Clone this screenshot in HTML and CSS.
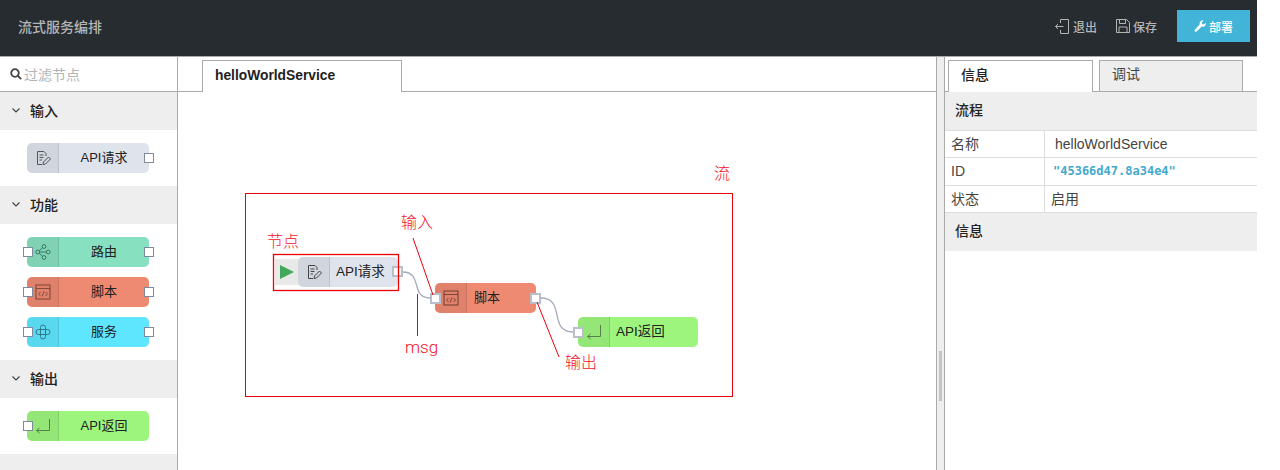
FILE: index.html
```html
<!DOCTYPE html>
<html lang="zh">
<head>
  <meta charset="UTF-8">
  <title>流式服务编排</title>
  <link rel="stylesheet" href="styles.css">
</head>
<body>
<div class="app">

  <header class="header">
    <div class="title">流式服务编排</div>
    <div class="actions">
      <a class="action">
        <svg width="14" height="15" viewBox="0 0 14 15" fill="none" stroke="#b5b5b5"><path d="M5.500 4V.5h8v14h-8V11M.5 7.500h8M3 5L.5 7.500 3 10"/></svg>
        退出
      </a>
      <a class="action action-save">
        <svg width="14" height="14" viewBox="0 0 14 14" fill="none" stroke="#b5b5b5"><path d="M.5.5h10l3 3v10H.5zM3.500.5v4h6v-4M3 13.500V8h8v5.500"/></svg>
        保存
      </a>
      <a class="deploy">
        <svg width="12" height="12" viewBox="0 0 12 12" fill="#fff"><path d="M11.700 2.700c.4 1.500-.1 3-1.500 3.700-1 .5-1.800.4-2.500.2L3 11.300c-.6.600-1.500.6-2 .1s-.6-1.400 0-2l4.700-4.800c-.2-.8-.2-1.700.3-2.500C6.800.7 8.300.1 9.600.4L7.800 2.300l.4 1.700 1.700.5z"/></svg>
        部署
      </a>
    </div>
  </header>

  <div class="main">

    <aside class="palette">
      <div class="filter">
        <svg width="12" height="12" viewBox="0 0 12 12" fill="none" stroke="#444" stroke-width="1.800"><circle cx="5" cy="5" r="3.800"/><path d="M8 8l3.200 3.200"/></svg>
        <span>过滤节点</span>
      </div>

      <div class="cat"><svg class="chev" width="8" height="5" viewBox="0 0 8 5" fill="none" stroke="#444" stroke-width="1.200"><path d="M.5.5L4 4 7.500.5"/></svg>输入</div>
      <div class="cat-body">
        <div class="node c-grey">
          <div class="node-icon">
            <svg width="16" height="16" viewBox="0 0 16 16" fill="none" stroke="#555"><use href="#i-api"/></svg>
          </div>
          <div class="node-label">API请求</div>
          <i class="port port-r"></i>
        </div>
      </div>

      <div class="cat"><svg class="chev" width="8" height="5" viewBox="0 0 8 5" fill="none" stroke="#444" stroke-width="1.200"><path d="M.5.5L4 4 7.500.5"/></svg>功能</div>
      <div class="cat-body">
        <div class="node c-teal">
          <div class="node-icon">
            <svg width="16" height="16" viewBox="0 0 16 16" fill="none" stroke="#3f7a68"><use href="#i-route"/></svg>
          </div>
          <div class="node-label">路由</div>
          <i class="port port-l"></i><i class="port port-r"></i>
        </div>
        <div class="node c-red">
          <div class="node-icon">
            <svg width="16" height="16" viewBox="0 0 16 16" fill="none" stroke="#7a4436"><use href="#i-script"/></svg>
          </div>
          <div class="node-label">脚本</div>
          <i class="port port-l"></i><i class="port port-r"></i>
        </div>
        <div class="node c-cyan">
          <div class="node-icon">
            <svg width="16" height="16" viewBox="0 0 16 16" fill="none" stroke="#2f7a8c"><use href="#i-service"/></svg>
          </div>
          <div class="node-label">服务</div>
          <i class="port port-l"></i><i class="port port-r"></i>
        </div>
      </div>

      <div class="cat"><svg class="chev" width="8" height="5" viewBox="0 0 8 5" fill="none" stroke="#444" stroke-width="1.200"><path d="M.5.5L4 4 7.500.5"/></svg>输出</div>
      <div class="cat-body">
        <div class="node c-green">
          <div class="node-icon">
            <svg width="16" height="16" viewBox="0 0 16 16" fill="none" stroke="#55804a"><use href="#i-return"/></svg>
          </div>
          <div class="node-label">API返回</div>
          <i class="port port-l"></i>
        </div>
      </div>
      <div class="cat cat-empty"></div>
    </aside>

    <section class="workspace">
      <div class="tabs">
        <div class="tab">helloWorldService</div>
      </div>
      <div class="canvas">
        <!-- wires sit under the nodes -->
        <svg class="overlay" width="758" height="378">
          <path d="M225 180C245 180 232 206 252 206" fill="none" stroke="#a4adbb" stroke-width="1.300"/>
          <path d="M363 206C388 206 370 240 395 240" fill="none" stroke="#a4adbb" stroke-width="1.300"/>
        </svg>

        <div class="play"><i></i></div>

        <div class="node c-grey flow-api">
          <div class="node-icon">
            <svg width="16" height="16" viewBox="0 0 16 16" fill="none" stroke="#444"><use href="#i-api"/></svg>
          </div>
          <div class="node-label">API请求</div>
          <i class="port port-r flow-port"></i>
        </div>

        <div class="node c-red flow-script">
          <div class="node-icon">
            <svg width="16" height="16" viewBox="0 0 16 16" fill="none" stroke="#6e3d30"><use href="#i-script"/></svg>
          </div>
          <div class="node-label">脚本</div>
          <i class="port port-l flow-port"></i><i class="port port-r flow-port"></i>
        </div>

        <div class="node c-green flow-return">
          <div class="node-icon">
            <svg width="16" height="16" viewBox="0 0 16 16" fill="none" stroke="#55804a"><use href="#i-return"/></svg>
          </div>
          <div class="node-label">API返回</div>
          <i class="port port-l flow-port"></i>
        </div>

        <!-- red annotations drawn on top -->
        <svg class="overlay" width="758" height="378">
          <rect x="67.500" y="101.500" width="487" height="203" fill="none" stroke="#e8000d"/>
          <rect x="95.500" y="162.500" width="125" height="36" fill="none" stroke="#f00000" stroke-width="1.300"/>
          <path d="M235 146l20 57M239.500 202v42M359 210l22 55" fill="none" stroke="#e8000d"/>
        </svg>

        <div class="note note-flow">流</div>
        <div class="note note-node">节点</div>
        <div class="note note-in">输入</div>
        <div class="note note-msg">msg</div>
        <div class="note note-out">输出</div>
      </div>
    </section>

    <div class="splitter"><i></i></div>

    <aside class="sidebar">
      <div class="side-tabs">
        <div class="side-tab active">信息</div>
        <div class="side-tab">调试</div>
      </div>
      <div class="section">流程</div>
      <div class="row"><div class="key">名称</div><div class="val val-name">helloWorldService</div></div>
      <div class="row row-id"><div class="key">ID</div><div class="val val-id">"45366d47.8a34e4"</div></div>
      <div class="row"><div class="key">状态</div><div class="val">启用</div></div>
      <div class="section section-last">信息</div>
    </aside>

  </div>
</div>

<svg class="defs" width="0" height="0">
  <symbol id="i-api" viewBox="0 0 16 16">
    <path d="M11 6V3.500L9 1.500H2.500v13H7M4.500 5h4M4.500 7.500h4M4.500 10h2.500M8 14.500l.5-2.500 5-5 2 2-5 5z"/>
  </symbol>
  <symbol id="i-route" viewBox="0 0 16 16">
    <circle cx="2.800" cy="8" r="1.900"/><circle cx="13.200" cy="8" r="1.900"/><circle cx="9" cy="2.500" r="1.900"/><circle cx="9" cy="13.500" r="1.900"/>
    <path d="M4.700 8h6.600M4.200 6.700l3.500-3M4.200 9.300l3.500 3"/>
  </symbol>
  <symbol id="i-script" viewBox="0 0 16 16">
    <rect x="1" y="1" width="14" height="14"/><path d="M1 4.500h14M5.500 8L3.500 10l2 2M10.500 8l2 2-2 2M9 7.500L7 12.500" stroke-width=".9"/>
  </symbol>
  <symbol id="i-service" viewBox="0 0 16 16">
    <rect x="1" y="5.500" width="14" height="5" rx="2.500"/><rect x="5.500" y="1" width="5" height="14" rx="2.500"/>
  </symbol>
  <symbol id="i-return" viewBox="0 0 16 16">
    <path d="M14.500 1v11.500H1.500M4.500 10l-3 2.500 3 2.500"/>
  </symbol>
</svg>
</body>
</html>
```

FILE: styles.css
```css
* {
  box-sizing: border-box;
}

html, body {
  margin: 0;
  height: 470px;
  overflow: hidden;
  background: #fff;
}

body {
  font-family: "Liberation Sans", "Noto Sans CJK SC", sans-serif;
  color: #333;
}

.app {
  width: 1257px;
  height: 470px;
  display: flex;
  flex-direction: column;
}

.defs {
  position: absolute;
}

/* header */
.header {
  height: 57px;
  flex: none;
  background: #272c30;
  border-bottom: 1px solid #aaa;
  display: flex;
  align-items: center;
  justify-content: space-between;
  padding: 0 7px 4px 18px;
  color: #b5b5b5;
}

.title {
  font-size: 14px;
  font-weight: 500;
}

.actions {
  display: flex;
  align-items: center;
}

.action {
  display: flex;
  align-items: center;
  gap: 4px;
  font-size: 12px;
  font-weight: 500;
  margin-right: 19px;
}

.action-save {
  gap: 3px;
  margin-right: 20px;
}

.deploy {
  width: 73px;
  height: 32px;
  background: #41b4d8;
  color: #fff;
  font-size: 12px;
  font-weight: 500;
  display: flex;
  align-items: center;
  justify-content: center;
  gap: 3px;
}

.main {
  flex: 1;
  display: flex;
  min-height: 0;
}

/* left palette */
.palette {
  width: 178px;
  flex: none;
  border-right: 1px solid #aaa;
  overflow: hidden;
}

.filter {
  height: 35px;
  border-bottom: 1px solid #aaa;
  display: flex;
  align-items: center;
  gap: 2px;
  padding-left: 10px;
  font-size: 14px;
  color: #b4b4b4;
}

.cat {
  height: 38px;
  background: #eee;
  display: flex;
  align-items: center;
  padding: 0 0 2px 12px;
  font-size: 14px;
  font-weight: 500;
  color: #222;
}

.cat-empty {
  height: 20px;
}

.chev {
  margin-right: 10px;
}

.cat-body {
  padding: 13px 0 13px 27px;
  display: flex;
  flex-direction: column;
  gap: 10px;
}

/* nodes */
.node {
  position: relative;
  width: 122px;
  height: 30px;
  border-radius: 5px;
  display: flex;
  font-size: 13px;
  color: #222;
}

.node-icon {
  width: 32px;
  flex: none;
  display: flex;
  align-items: center;
  justify-content: center;
  border-radius: 5px 0 0 5px;
  background: rgba(0, 0, 0, 0.06);
  border-right: 1px solid rgba(0, 0, 0, 0.1);
}

.node-label {
  flex: 1;
  text-align: center;
  line-height: 29px;
}

.c-grey { background: #dfe4ec; }
.c-teal { background: #87e0bf; }
.c-red { background: #ef8a72; }
.c-cyan { background: #5fe6ff; }
.c-green { background: #9ef57e; }

.port {
  position: absolute;
  top: 10px;
  width: 10px;
  height: 10px;
  background: #fff;
  border: 1px solid #7f8b9d;
}

.port-l { left: -4px; }
.port-r { right: -5px; }

.flow-port {
  width: 11px;
  height: 11px;
  border: 2px solid #b8bfcb;
}

.flow-port.port-l { left: -5px; }

/* workspace */
.workspace {
  width: 758px;
  flex: none;
  display: flex;
  flex-direction: column;
}

.tabs {
  height: 35px;
  flex: none;
  border-bottom: 1px solid #aaa;
  padding: 3px 0 0 24px;
}

.tab {
  width: 200px;
  height: 32px;
  background: #fff;
  border: 1px solid #aaa;
  border-bottom: 0;
  padding-left: 12px;
  line-height: 30px;
  font-size: 13.800px;
  font-weight: bold;
  color: #222;
}

.canvas {
  position: relative;
  flex: 1;
}

.overlay {
  position: absolute;
  left: 0;
  top: 0;
}

.note {
  position: absolute;
  font-size: 16px;
  line-height: 20px;
  color: #f5101f;
  font-weight: 300;
}

.note-flow { left: 536px; top: 72px; }
.note-node { left: 89px; top: 140px; }
.note-in { left: 223px; top: 121px; }
.note-msg { left: 227px; top: 245px; font-family: Roboto, sans-serif; font-size: 17px; }
.note-out { left: 387px; top: 261px; }

.play {
  position: absolute;
  left: 97px;
  top: 167px;
  width: 26px;
  height: 26px;
  background: #e9e9e9;
  display: flex;
  align-items: center;
  padding-left: 5px;
}

.play i {
  border-left: 14px solid #42a85a;
  border-top: 7.500px solid transparent;
  border-bottom: 7.500px solid transparent;
}

.flow-api {
  position: absolute;
  left: 120px;
  top: 165px;
  width: 100px;
}

.flow-api .flow-port {
  top: 9px;
}

.flow-script {
  position: absolute;
  left: 257px;
  top: 191px;
  width: 101px;
}

.flow-return {
  position: absolute;
  left: 400px;
  top: 225px;
  width: 120px;
}

.flow-api .node-label,
.flow-return .node-label {
  text-align: left;
  padding-left: 6px;
  font-size: 13.500px;
}

.flow-script .node-label {
  text-align: left;
  padding-left: 7px;
}

/* splitter */
.splitter {
  width: 9px;
  flex: none;
  background: #eee;
  border-left: 1px solid #aaa;
  border-right: 1px solid #aaa;
  position: relative;
}

.splitter i {
  position: absolute;
  left: 2px;
  top: 294px;
  width: 3px;
  height: 50px;
  background: #c4c4c4;
}

/* right sidebar */
.sidebar {
  flex: 1;
  min-width: 0;
}

.side-tabs {
  height: 35px;
  display: flex;
  gap: 6px;
  padding: 3px 0 0 3px;
  border-bottom: 1px solid #aaa;
}

.side-tab {
  width: 144px;
  height: 31px;
  border: 1px solid #aaa;
  border-bottom: 0;
  background: #eee;
  padding-left: 12px;
  line-height: 27px;
  font-size: 14px;
  color: #444;
}

.side-tab.active {
  width: 145px;
  background: #fff;
  height: 32px;
  line-height: 28px;
  font-weight: 500;
  color: #222;
}

.section {
  height: 39px;
  background: #eee;
  border-bottom: 1px solid #ddd;
  padding-left: 10px;
  line-height: 37px;
  font-size: 14px;
  font-weight: 500;
  color: #222;
}

.section-last {
  height: 38px;
  border-bottom: 0;
}

.row {
  height: 27px;
  display: flex;
  border-bottom: 1px solid #ddd;
  font-size: 14px;
  color: #444;
  line-height: 26px;
}

.row-id {
  height: 28px;
}

.key {
  width: 100px;
  flex: none;
  padding-left: 6px;
  border-right: 1px solid #ddd;
}

.val {
  padding-left: 6px;
}

.val-name {
  padding-left: 10px;
}

.val-id {
  padding-left: 8px;
  font-family: "DejaVu Sans Mono", monospace;
  font-size: 12px;
  font-weight: bold;
  color: #44a9cc;
}
```
